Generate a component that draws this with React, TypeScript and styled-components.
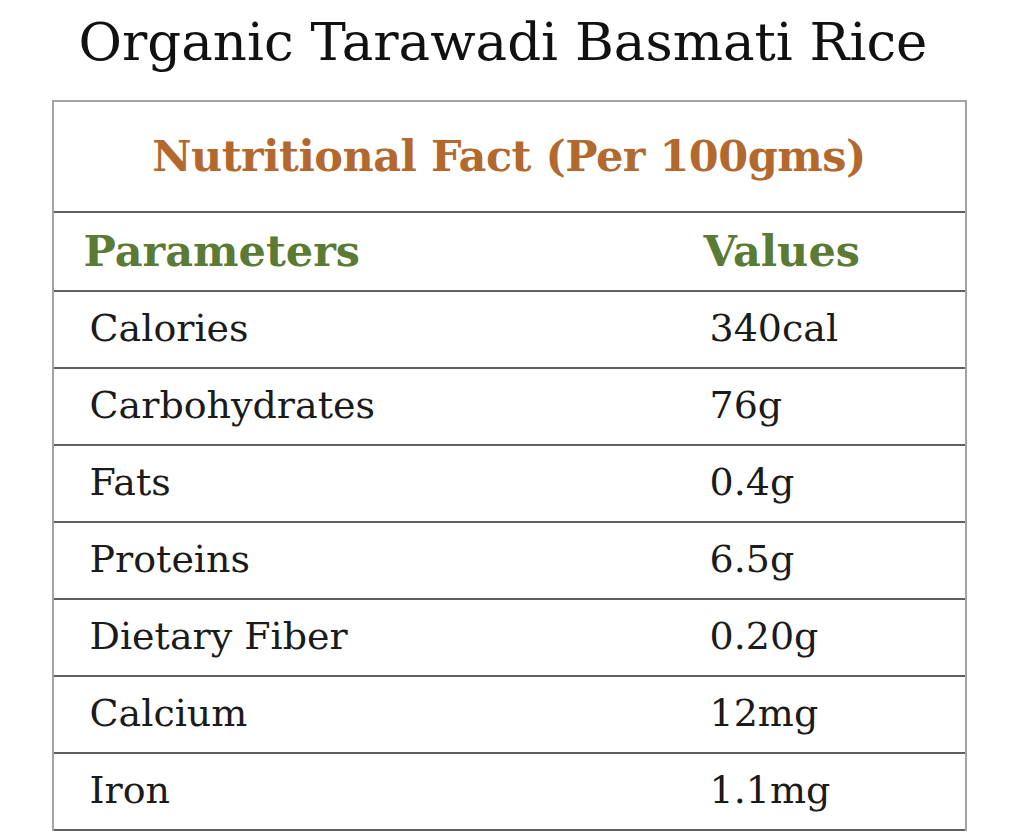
import styled, { createGlobalStyle } from 'styled-components';

const GlobalStyle = createGlobalStyle`
  html, body {
    margin: 0;
    padding: 0;
    background: #ffffff;
  }
  body {
    font-family: 'DejaVu Serif', 'Liberation Serif', serif;
    color: #1a1a1a;
  }
`;

interface Fact {
  name: string;
  value: string;
}

const facts: Fact[] = [
  { name: 'Calories', value: '340cal' },
  { name: 'Carbohydrates', value: '76g' },
  { name: 'Fats', value: '0.4g' },
  { name: 'Proteins', value: '6.5g' },
  { name: 'Dietary Fiber', value: '0.20g' },
  { name: 'Calcium', value: '12mg' },
  { name: 'Iron', value: '1.1mg' },
];

const Page = styled.div`
  width: 1018px;
  height: 832px;
  overflow: hidden;
  display: flex;
  flex-direction: column;
  align-items: center;
`;

const Title = styled.h1`
  margin: 0;
  height: 100px;
  display: flex;
  align-items: center;
  font-family: 'DejaVu Serif', serif;
  font-weight: 400;
  font-size: 53px;
  color: #111;
  padding-bottom: 18px;
  padding-right: 12px;
  box-sizing: border-box;
`;

const Table = styled.div`
  width: 915px;
  box-sizing: border-box;
  border: 2px solid #a3a3a3;
  border-bottom: none;
  display: flex;
  flex-direction: column;
`;

const Caption = styled.div`
  height: 111px;
  display: flex;
  align-items: center;
  justify-content: center;
  font-family: 'DejaVu Serif', serif;
  font-weight: 700;
  font-size: 43px;
  color: #b3692d;
  letter-spacing: -0.5px;
  border-bottom: 2px solid #5f5f5f;
  padding-bottom: 2px;
  box-sizing: border-box;
`;

const Row = styled.div<{ $head?: boolean }>`
  height: ${({ $head }) => ($head ? '79px' : '77px')};
  display: grid;
  grid-template-columns: 620px 1fr;
  align-items: center;
  border-bottom: 2px solid #5f5f5f;
  box-sizing: border-box;
  padding-bottom: ${({ $head }) => ($head ? '2px' : '4px')};
`;

const HeadCell = styled.div`
  font-family: 'DejaVu Serif', serif;
  font-weight: 700;
  font-size: 43px;
  color: #5b7a33;
  padding-left: 30px;
`;

const Cell = styled.div`
  font-size: 38px;
  color: #1b1b1b;
  padding-left: 36px;
`;

export default function App() {
  return (
    <>
      <GlobalStyle />
      <Page>
        <Title>Organic Tarawadi Basmati Rice</Title>
        <Table>
          <Caption>Nutritional Fact (Per 100gms)</Caption>
          <Row $head>
            <HeadCell>Parameters</HeadCell>
            <HeadCell>Values</HeadCell>
          </Row>
          {facts.map((f) => (
            <Row key={f.name}>
              <Cell>{f.name}</Cell>
              <Cell>{f.value}</Cell>
            </Row>
          ))}
        </Table>
      </Page>
    </>
  );
}
